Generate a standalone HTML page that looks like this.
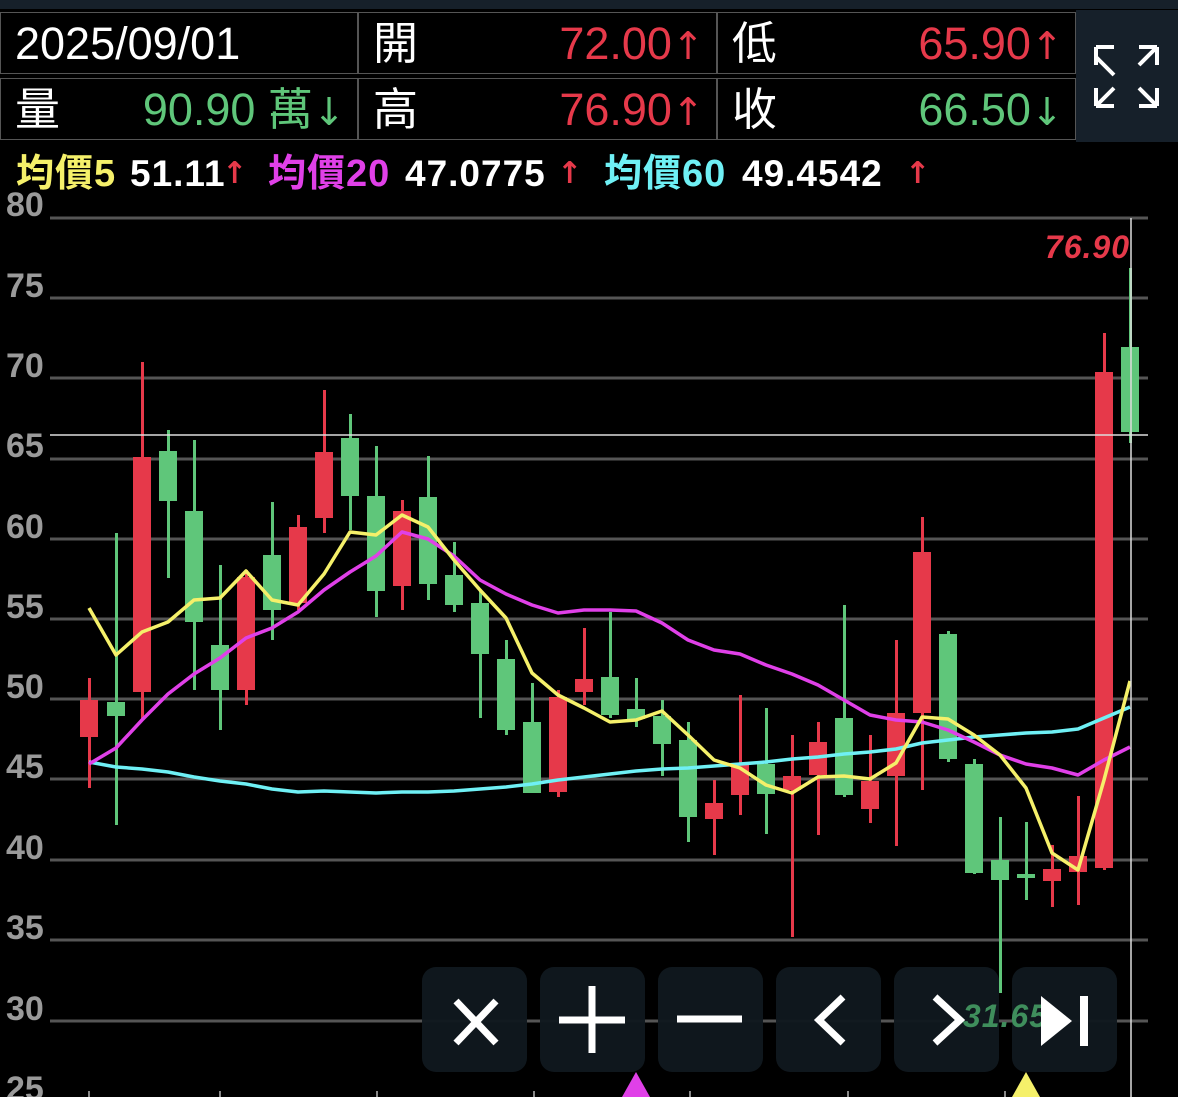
<!DOCTYPE html>
<html><head><meta charset="utf-8"><style>
html,body{margin:0;padding:0;background:#000;width:1178px;height:1097px;overflow:hidden;font-family:"Liberation Sans","Noto Sans CJK TC",sans-serif}
.top{position:absolute;left:0;top:0;width:1178px;height:9px;background:#16202a}
.cell{position:absolute;height:62px;border:1px solid #555;box-sizing:border-box;background:#000;color:#fff;font-size:45px;line-height:62px}
.cell .l{position:absolute;left:14px;top:0}
.cell .r{position:absolute;right:12px;top:0}
.red{color:#e6394a}.grn{color:#5fc67a}
.ar{font-family:"DejaVu Sans",sans-serif;font-size:0.85em}
.panel{position:absolute;left:1076px;top:10px;width:102px;height:132px;background:#16202a}
.lg{position:absolute;top:152px;font-size:37px;font-weight:bold;white-space:nowrap;line-height:44px}
.lg.c{font-size:38px;letter-spacing:1px}
.lg.n{letter-spacing:1px;color:#fff;font-size:37px}
.lg.a{font-family:"DejaVu Sans",sans-serif;font-size:30px;color:#e6394a}
.btn{position:absolute;top:967px;width:105px;height:105px;border-radius:14px;background:rgba(16,24,30,0.96)}
</style></head><body>
<div class="top"></div>
<div class="cell" style="left:0;top:12px;width:358px"><span class="l">2025/09/01</span></div>
<div class="cell" style="left:358px;top:12px;width:359px"><span class="l">開</span><span class="r red">72.00<span class="ar">↑</span></span></div>
<div class="cell" style="left:717px;top:12px;width:359px"><span class="l">低</span><span class="r red">65.90<span class="ar">↑</span></span></div>
<div class="cell" style="left:0;top:78px;width:358px"><span class="l">量</span><span class="r grn">90.90 萬<span class="ar">↓</span></span></div>
<div class="cell" style="left:358px;top:78px;width:359px"><span class="l">高</span><span class="r red">76.90<span class="ar">↑</span></span></div>
<div class="cell" style="left:717px;top:78px;width:359px"><span class="l">收</span><span class="r grn">66.50<span class="ar">↓</span></span></div>
<div class="panel"><svg width="102" height="132" fill="none" stroke="#fff" stroke-width="4">
<path d="M20 47 L38 65 M20 37 V55 M20 37 H38"/>
<path d="M81 37 L63 55 M81 37 V55 M81 37 H63"/>
<path d="M20 96 L38 78 M20 96 V78 M20 96 H38"/>
<path d="M81 96 L63 78 M81 96 V78 M81 96 H63"/>
</svg></div>
<span class="lg c" style="left:16px;color:#f5f06a">均價5</span>
<span class="lg n" style="left:130px">51.11</span>
<span class="lg a" style="left:222px">↑</span>
<span class="lg c" style="left:268px;color:#e040e8">均價20</span>
<span class="lg n" style="left:405px">47.0775</span>
<span class="lg a" style="left:557px">↑</span>
<span class="lg c" style="left:604px;color:#6ff0f5">均價60</span>
<span class="lg n" style="left:742px">49.4542</span>
<span class="lg a" style="left:905px">↑</span>
<svg style="position:absolute;left:0;top:0" width="1178" height="1097">
<g stroke="#555" stroke-width="3">
<line x1="50" y1="218" x2="1148" y2="218"/><line x1="50" y1="298" x2="1148" y2="298"/><line x1="50" y1="378" x2="1148" y2="378"/><line x1="50" y1="459" x2="1148" y2="459"/><line x1="50" y1="539" x2="1148" y2="539"/><line x1="50" y1="619" x2="1148" y2="619"/><line x1="50" y1="699" x2="1148" y2="699"/><line x1="50" y1="779" x2="1148" y2="779"/><line x1="50" y1="860" x2="1148" y2="860"/><line x1="50" y1="940" x2="1148" y2="940"/><line x1="50" y1="1021" x2="1148" y2="1021"/>
</g>
<g fill="#9a9a9a" font-family="Liberation Sans" font-weight="bold" font-size="34">
<text x="6" y="216">80</text><text x="6" y="297">75</text><text x="6" y="377">70</text><text x="6" y="457">65</text><text x="6" y="538">60</text><text x="6" y="618">55</text><text x="6" y="698">50</text><text x="6" y="778">45</text><text x="6" y="859">40</text><text x="6" y="939">35</text><text x="6" y="1020">30</text><text x="6" y="1100">25</text>
</g>
<g stroke="#888" stroke-width="2"><line x1="89" y1="1091" x2="89" y2="1097"/><line x1="220" y1="1091" x2="220" y2="1097"/><line x1="377" y1="1091" x2="377" y2="1097"/><line x1="534" y1="1091" x2="534" y2="1097"/><line x1="690" y1="1091" x2="690" y2="1097"/><line x1="848" y1="1091" x2="848" y2="1097"/><line x1="1005" y1="1091" x2="1005" y2="1097"/></g>
<g fill="#e6394a">
<rect x="88" y="678" width="3" height="110"/><rect x="80" y="700" width="18" height="37"/>
<rect x="141" y="362" width="3" height="358"/><rect x="133" y="457" width="18" height="235"/>
<rect x="245" y="570" width="3" height="135"/><rect x="237" y="577" width="18" height="113"/>
<rect x="297" y="515" width="3" height="95"/><rect x="289" y="527" width="18" height="76"/>
<rect x="323" y="390" width="3" height="143"/><rect x="315" y="452" width="18" height="66"/>
<rect x="401" y="500" width="3" height="110"/><rect x="393" y="511" width="18" height="75"/>
<rect x="557" y="690" width="3" height="107"/><rect x="549" y="697" width="18" height="95"/>
<rect x="583" y="628" width="3" height="77"/><rect x="575" y="679" width="18" height="13"/>
<rect x="713" y="780" width="3" height="75"/><rect x="705" y="803" width="18" height="16"/>
<rect x="739" y="695" width="3" height="120"/><rect x="731" y="764" width="18" height="31"/>
<rect x="791" y="735" width="3" height="202"/><rect x="783" y="776" width="18" height="14"/>
<rect x="817" y="722" width="3" height="113"/><rect x="809" y="742" width="18" height="33"/>
<rect x="869" y="735" width="3" height="88"/><rect x="861" y="781" width="18" height="28"/>
<rect x="895" y="640" width="3" height="206"/><rect x="887" y="713" width="18" height="63"/>
<rect x="921" y="517" width="3" height="273"/><rect x="913" y="552" width="18" height="161"/>
<rect x="1051" y="845" width="3" height="62"/><rect x="1043" y="869" width="18" height="12"/>
<rect x="1077" y="796" width="3" height="109"/><rect x="1069" y="856" width="18" height="16"/>
<rect x="1103" y="333" width="3" height="537"/><rect x="1095" y="372" width="18" height="496"/>
</g>
<g fill="#5fc67a">
<rect x="115" y="533" width="3" height="292"/><rect x="107" y="702" width="18" height="14"/>
<rect x="167" y="430" width="3" height="148"/><rect x="159" y="451" width="18" height="50"/>
<rect x="193" y="440" width="3" height="250"/><rect x="185" y="511" width="18" height="111"/>
<rect x="219" y="565" width="3" height="165"/><rect x="211" y="645" width="18" height="45"/>
<rect x="271" y="502" width="3" height="138"/><rect x="263" y="555" width="18" height="55"/>
<rect x="349" y="414" width="3" height="116"/><rect x="341" y="438" width="18" height="58"/>
<rect x="375" y="446" width="3" height="171"/><rect x="367" y="496" width="18" height="95"/>
<rect x="427" y="456" width="3" height="144"/><rect x="419" y="497" width="18" height="87"/>
<rect x="453" y="542" width="3" height="70"/><rect x="445" y="575" width="18" height="30"/>
<rect x="479" y="590" width="3" height="128"/><rect x="471" y="603" width="18" height="51"/>
<rect x="505" y="640" width="3" height="95"/><rect x="497" y="659" width="18" height="71"/>
<rect x="531" y="683" width="3" height="110"/><rect x="523" y="722" width="18" height="71"/>
<rect x="609" y="612" width="3" height="106"/><rect x="601" y="677" width="18" height="38"/>
<rect x="635" y="678" width="3" height="49"/><rect x="627" y="709" width="18" height="10"/>
<rect x="661" y="700" width="3" height="76"/><rect x="653" y="716" width="18" height="28"/>
<rect x="687" y="722" width="3" height="120"/><rect x="679" y="740" width="18" height="77"/>
<rect x="765" y="708" width="3" height="126"/><rect x="757" y="764" width="18" height="30"/>
<rect x="843" y="605" width="3" height="192"/><rect x="835" y="718" width="18" height="77"/>
<rect x="947" y="631" width="3" height="131"/><rect x="939" y="634" width="18" height="125"/>
<rect x="973" y="759" width="3" height="115"/><rect x="965" y="764" width="18" height="109"/>
<rect x="999" y="817" width="3" height="176"/><rect x="991" y="860" width="18" height="20"/>
<rect x="1025" y="822" width="3" height="78"/><rect x="1017" y="874" width="18" height="4"/>
<rect x="1129" y="268" width="3" height="175"/><rect x="1121" y="347" width="18" height="85"/>
</g>
<g fill="none" stroke-width="3.5" stroke-linejoin="round">
<polyline stroke="#6ff0f5" points="89,762 116,767 142,769 168,772 194,777 220,781 246,784 272,789 298,792 324,791 350,792 376,793 402,792 428,792 454,791 480,789 506,787 532,784 558,780 584,777 610,774 636,771 662,769 688,768 714,766 740,764 766,762 792,759 818,757 844,754 870,752 896,749 922,743 948,740 974,737 1000,735 1026,733 1052,732 1078,729 1104,718 1130,707"/>
<polyline stroke="#e040e8" points="89,764 116,748 142,720 168,694 194,674 220,658 246,638 272,628 298,612 324,590 350,572 376,556 402,532 428,539 454,556 480,580 506,594 532,605 558,613 584,610 610,610 636,611 662,623 688,640 714,650 740,654 766,665 792,674 818,685 844,700 870,715 896,720 922,722 948,730 974,742 1000,755 1026,764 1052,768 1078,775 1104,760 1130,747"/>
<polyline stroke="#f5f06a" points="89,608 116,655 142,632 168,622 194,600 220,598 246,571 272,600 298,605 324,574 350,532 376,535 402,515 428,527 454,560 480,590 506,618 532,673 558,695 584,708 610,722 636,720 662,711 688,735 714,760 740,768 766,785 792,793 818,777 844,776 870,779 896,763 922,717 948,719 974,735 1000,755 1026,788 1052,853 1078,870 1104,780 1130,681"/>
</g>
<g stroke="#ddd" stroke-width="1.5"><line x1="1131" y1="218" x2="1131" y2="1097"/><line x1="50" y1="435" x2="1148" y2="435"/></g>
<text x="1130" y="258" text-anchor="end" fill="#e6394a" font-family="Liberation Sans" font-weight="bold" font-style="italic" font-size="32" letter-spacing="1">76.90</text>
<polygon points="636,1072 622,1097 650,1097" fill="#e040e8"/>
<polygon points="1026,1072 1012,1097 1040,1097" fill="#f5f06a"/>
</svg>
<div class="btn" style="left:422px"></div>
<div class="btn" style="left:540px"></div>
<div class="btn" style="left:658px"></div>
<div class="btn" style="left:776px"></div>
<div class="btn" style="left:894px"></div>
<div class="btn" style="left:1012px"></div>
<svg style="position:absolute;left:0;top:0" width="1178" height="1097">
<text x="1048" y="1027" text-anchor="end" fill="#3f8e5c" font-family="Liberation Sans" font-weight="bold" font-style="italic" font-size="32" letter-spacing="1">31.65</text>
<g stroke="#fff" stroke-width="7" fill="none">
<path d="M456 1001 L496 1043 M496 1001 L456 1043"/>
<path d="M592 986 V1053 M559 1020 H625"/>
<path d="M677 1019 H742"/>
<path d="M843 997 L819 1020 L843 1043"/>
<path d="M935 997 L960 1020 L935 1043"/>
</g>
<polygon points="1041,996 1041,1046 1072,1021" fill="#fff"/>
<rect x="1080" y="996" width="8" height="50" fill="#fff"/>
</svg>
</body></html>
